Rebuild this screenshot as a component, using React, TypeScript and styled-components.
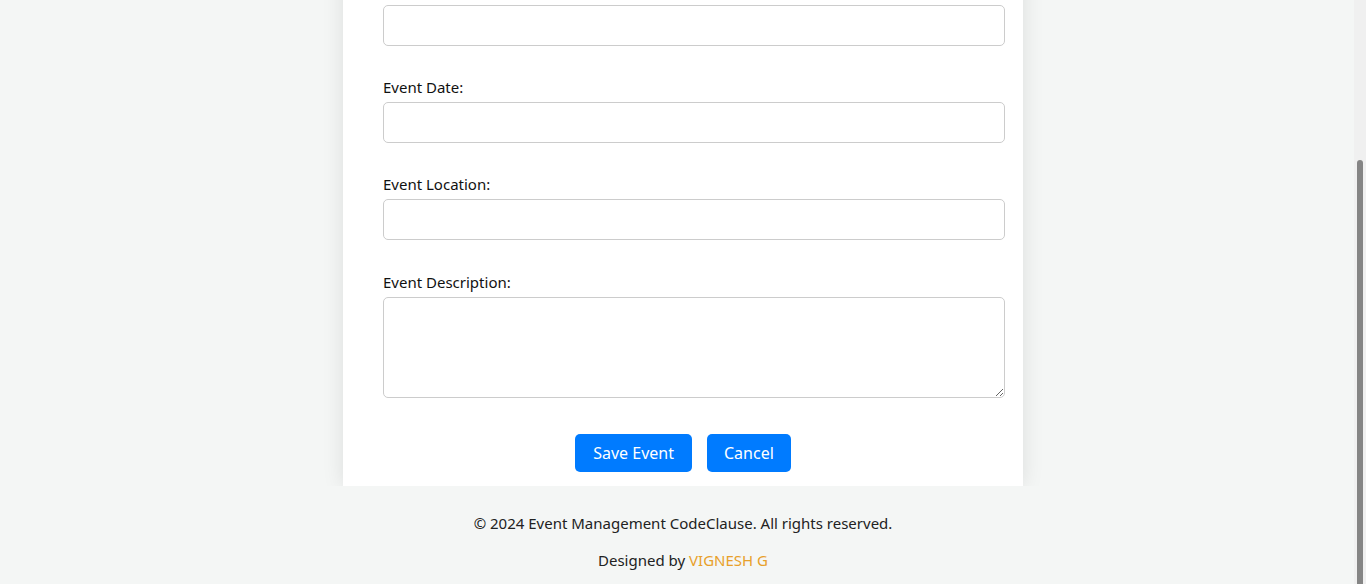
import React, { useLayoutEffect, useRef, useState } from "react";
import styled, { createGlobalStyle } from "styled-components";

const Global = createGlobalStyle`
  html, body { margin: 0; padding: 0; height: 584px; overflow: hidden; }
  body { background: #f4f6f5; font-family: "Noto Sans", "Open Sans", sans-serif; }
  * { box-sizing: content-box; }
`;

const Viewport = styled.div`
  position: relative;
  height: 584px;
  overflow: hidden;
  background: #f4f6f5;
`;

const Scroller = styled.div`
  height: 584px;
  overflow: hidden;
`;

const Page = styled.div`
  padding-top: 20px;
`;

const Header = styled.h1`
  margin: 0 0 20px;
  font-size: 28px;
  line-height: 36px;
  text-align: center;
  color: #333;
`;

const Card = styled.div`
  width: 600px;
  margin: 0 auto;
  padding: 40px 40px 14px;
  background: #fff;
  box-shadow: 0 0 20px rgba(0, 0, 0, 0.1);
`;

const Title = styled.h2`
  margin: 0 0 52px;
  font-size: 24px;
  line-height: 32px;
  text-align: center;
  color: #333;
`;

const Group = styled.div<{ $gap?: number }>`
  margin-bottom: ${(p) => p.$gap ?? 31}px;
`;

const Label = styled.label`
  display: block;
  margin-bottom: 5px;
  font-size: 15px;
  line-height: 20px;
  color: #111;
`;

const Input = styled.input`
  display: block;
  width: 100%;
  height: 19px;
  padding: 10px;
  margin: 0;
  border: 1px solid #ccc;
  border-radius: 5px;
  font: 16px "Noto Sans", sans-serif;
  outline: none;
  background: #fff;
`;

const TextArea = styled.textarea`
  display: block;
  width: 100%;
  height: 79px;
  padding: 10px;
  margin: 0;
  border: 1px solid #ccc;
  border-radius: 5px;
  font: 16px "Noto Sans", sans-serif;
  resize: vertical;
  outline: none;
`;

const Actions = styled.div`
  display: flex;
  justify-content: center;
  gap: 15px;
  margin-top: 5px;
`;

const Button = styled.button<{ $px: number }>`
  height: 38px;
  padding: 0 ${(p) => p.$px}px;
  border: none;
  border-radius: 5px;
  background: #007bff;
  color: #fff;
  font: 16px "Noto Sans", sans-serif;
  cursor: pointer;
`;

const Footer = styled.footer`
  position: relative;
  background: #f4f6f5;
  padding: 26px 0 13px;
  text-align: center;
  color: #222;
  font-size: 15px;
  line-height: 22px;
`;

const FooterLine = styled.p`
  margin: 0 0 15px;
  &:last-child { margin-bottom: 0; }
`;

const Highlight = styled.span`
  color: #e8a02a;
`;

const Track = styled.div`
  position: absolute;
  top: 0;
  right: 0;
  width: 12px;
  height: 584px;
  background: #f0f0f0;
`;

const Thumb = styled.div`
  position: absolute;
  left: 3px;
  width: 6px;
  background: #858585;
  border-radius: 3px 3px 0 0;
`;

export default function App() {
  const ref = useRef<HTMLDivElement>(null);
  const [thumb, setThumb] = useState({ top: 160, height: 424 });

  useLayoutEffect(() => {
    const el = ref.current;
    if (!el) return;
    el.scrollTop = el.scrollHeight;
    const h = el.clientHeight;
    const sh = el.scrollHeight;
    setThumb({ top: (el.scrollTop / sh) * h, height: (h / sh) * h });
  }, []);

  return (
    <Viewport>
      <Global />
      <Scroller ref={ref}>
        <Page>
          <Header>Event Management</Header>
          <Card>
            <Title>Create Event</Title>
            <Group>
              <Label htmlFor="name">Event Name:</Label>
              <Input id="name" type="text" />
            </Group>
            <Group>
              <Label htmlFor="date">Event Date:</Label>
              <Input id="date" type="text" />
            </Group>
            <Group $gap={32}>
              <Label htmlFor="loc">Event Location:</Label>
              <Input id="loc" type="text" />
            </Group>
            <Group $gap={36}>
              <Label htmlFor="desc">Event Description:</Label>
              <TextArea id="desc" />
            </Group>
            <Actions>
              <Button $px={18}>Save Event</Button>
              <Button $px={17}>Cancel</Button>
            </Actions>
          </Card>
          <Footer>
            <FooterLine>© 2024 Event Management CodeClause. All rights reserved.</FooterLine>
            <FooterLine>
              Designed by <Highlight>VIGNESH G</Highlight>
            </FooterLine>
          </Footer>
        </Page>
      </Scroller>
      <Track>
        <Thumb style={{ top: thumb.top, height: thumb.height }} />
      </Track>
    </Viewport>
  );
}
